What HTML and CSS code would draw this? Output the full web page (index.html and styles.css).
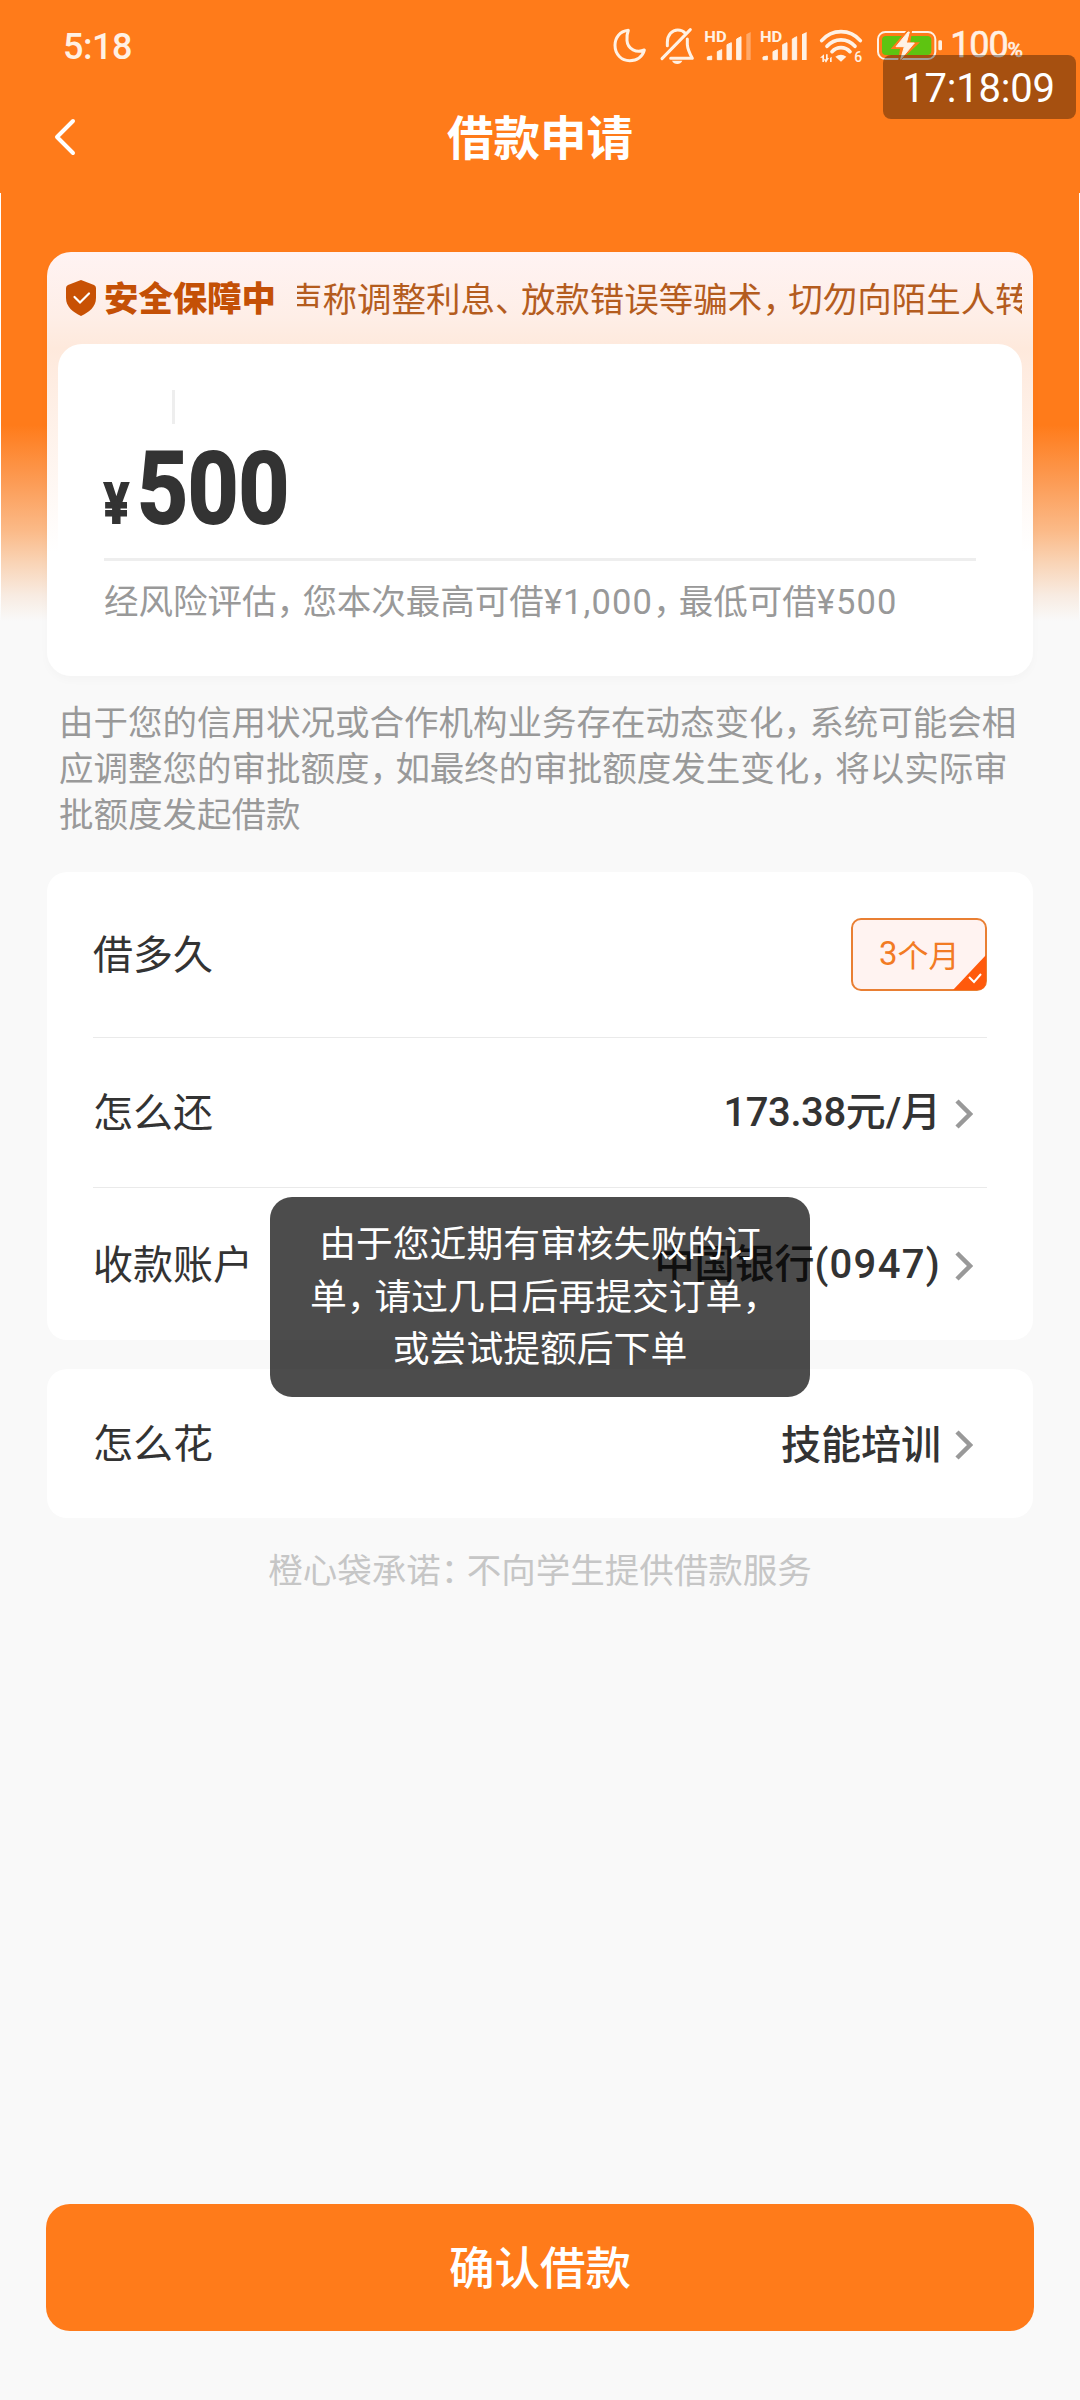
FILE: index.html
```html
<!DOCTYPE html>
<html lang="zh-CN">
<head>
<meta charset="utf-8">
<title>借款申请</title>
<link rel="stylesheet" href="styles.css">
</head>
<body>
<div class="app">
  <header class="top">
    <div class="status">
      <span class="clock">5:18</span>
      <svg class="status-icons" viewBox="90 75 1000 120" width="333.33" height="40">
        <defs>
          <g id="bars" stroke-width="3" stroke-linejoin="round">
            <path d="M8 171L21 168V179H8ZM38 155L51 149V179H38ZM67 134L80 128V179H67ZM96 117L109 110V179H96Z"/>
          </g>
        </defs>
        <g fill="none" stroke="#fff1e4" stroke-width="9" stroke-linecap="round" stroke-linejoin="round">
          <path d="M145 91C118 94 105 114 105 136C105 164 125 182 149 182C172 182 188 169 193 150C170 160 143 148 141 122C140 108 142 98 145 91Z"/>
          <path d="M331 89L246 176M262 137V127C262 104 277 90 293 90C302 90 310 93 315 99M322 117V134Q323 150 337 175H272"/>
        </g>
        <path d="M276 182H307Q302 192 292 192Q281 192 276 182Z" fill="#fff1e4"/>
        <g fill="#fff1e4" stroke="none">
          <text class="hd" x="373" y="125" textLength="67" lengthAdjust="spacingAndGlyphs">HD</text>
          <use href="#bars" x="374" stroke="#fff1e4"/>
          <path d="M499 103L512 96V180H499Z" opacity=".4"/>
          <text class="hd" x="540" y="125" textLength="67" lengthAdjust="spacingAndGlyphs">HD</text>
          <use href="#bars" x="541" stroke="#fff1e4"/>
          <path d="M666 103L680 96V180H666Z"/>
          <path d="M766 170Q783 159 799 170L783 185Z"/>
          <path d="M727 186V173H720L732 163V186ZM738 163V178H731L738 188L747 174H743V163ZM750 174V186H755V170Z"/>
          <text class="six" x="823" y="186">6</text>
          <rect x="1075" y="121" width="11" height="30" rx="4"/>
        </g>
        <g fill="none" stroke="#fff1e4" stroke-width="11" stroke-linecap="round">
          <path d="M725 122C756 86 810 86 841 122M741 139C764 113 802 113 825 139M756 155C771 139 795 139 810 155"/>
        </g>
        <rect x="894" y="96" width="172" height="81" rx="22" fill="none" stroke="#fff1e4" stroke-width="6"/>
        <rect x="906" y="108" width="148" height="57" rx="12" fill="#5ec411"/>
        <path d="M983 88L932 147H960L953 190L1020 127H991L997 88Z" fill="#ff7b1a"/>
        <path d="M984 96L948 140H973L962 178L1003 129H979L988 96Z" fill="#fff1e4" stroke="#fff1e4" stroke-width="3"/>
      </svg>
      <span class="battery">100<small>%</small></span>
    </div>
    <nav class="nav">
      <svg class="back" width="24" height="40" viewBox="0 0 24 40"><path d="M21 4L5 20L21 36" fill="none" stroke="#fff" stroke-width="4" stroke-linecap="round" stroke-linejoin="round"/></svg>
      <h1>借款申请</h1>
    </nav>
  </header>

  <main class="content">
    <section class="loan">
      <div class="safety">
        <svg width="30" height="36" viewBox="0 0 30 36"><path d="M15 0L28 5Q30 6 30 8V18C30 27 23 32 15 36C7 32 0 27 0 18V8Q0 6 2 5Z" fill="#c85104"/><path d="M8.500 17L14 22.500L23 13.500" fill="none" stroke="#fff" stroke-width="2.200" stroke-linecap="round"/></svg>
        <strong>安全保障中</strong>
        <div class="marquee"><span>声称调整利息<i>、</i>放款错误等骗术<i>，</i>切勿向陌生人转</span></div>
      </div>
      <div class="amount-card">
        <div class="mark"></div>
        <div class="amount"><span class="yen">¥</span><span class="num">500</span></div>
        <p class="limit">经风险评估<i>，</i>您本次最高可借<b>¥1,000</b><i>，</i>最低可借<b>¥500</b></p>
      </div>
    </section>

    <p class="notice">由于您的信用状况或合作机构业务存在动态变化<i>，</i>系统可能会相<br>应调整您的审批额度<i>，</i>如最终的审批额度发生变化<i>，</i>将以实际审<br>批额度发起借款</p>

    <section class="list">
      <div class="row term">
        <span>借多久</span>
        <div class="chip"><b>3</b>个月
          <svg class="tick" width="33" height="35" viewBox="0 0 33 35"><path d="M0 35L33 0V26Q33 35 24 35Z" fill="#ff5a0c"/><path d="M16 22L21 27L28 19" fill="none" stroke="#fff" stroke-width="2"/></svg>
        </div>
      </div>
      <div class="row repay">
        <span>怎么还</span>
        <div class="value"><p><b>173.38</b>元<b>/</b>月</p><svg class="arrow" viewBox="0 0 18 30"><path d="M2 2L15 15L2 28"/></svg></div>
      </div>
      <div class="row account">
        <span>收款账户</span>
        <div class="value"><p>中国银行<b>(0947)</b></p><svg class="arrow" viewBox="0 0 18 30"><path d="M2 2L15 15L2 28"/></svg></div>
      </div>
    </section>

    <section class="list usage">
      <div class="row">
        <span>怎么花</span>
        <div class="value"><p>技能培训</p><svg class="arrow" viewBox="0 0 18 30"><path d="M2 2L15 15L2 28"/></svg></div>
      </div>
    </section>
    <p class="promise">橙心袋承诺<i>：</i>不向学生提供借款服务</p>
  </main>

  <button class="confirm">确认借款</button>

  <div class="toast">由于您近期有审核失败的订<br>单<i>，</i>请过几日后再提交订单<i>，</i><br>或尝试提额后下单</div>
  <div class="timestamp">17:18:09</div>
</div>
</body>
</html>
```
FILE: styles.css
```css
* { box-sizing: border-box; margin: 0; padding: 0; }
body { background: #f9f9f9; font-family: "Noto Sans CJK SC", sans-serif; }
i { font-style: normal; letter-spacing: -0.25em; }
b { font-family: Roboto, sans-serif; font-weight: inherit; }

.app { position: relative; display: flex; flex-direction: column; width: 1080px; height: 2400px; overflow: hidden; }

.top { height: 193px; background: #ff7b1a; color: #fff; }
.status { display: flex; align-items: center; height: 91px; padding-left: 63px; color: #fff1e4; font-family: Roboto, sans-serif; font-weight: 500; }
.clock { width: 547px; padding-top: 2px; font-size: 36px; letter-spacing: -0.5px; }
.status-icons { flex: none; margin-top: -1px; }
.battery { margin: 3px 0 0 7px; font-size: 36px; line-height: 40px; font-weight: 400; letter-spacing: -1.2px; -webkit-text-stroke: 0.6px #fff1e4; }
.battery small { font-size: 21px; }
.hd { font: 700 42px Roboto, sans-serif; }
.six { font: 500 42px Roboto, sans-serif; }
.nav { position: relative; display: flex; align-items: center; justify-content: center; height: 92px; padding-bottom: 4px; }
.back { position: absolute; left: 52px; top: 26px; }
.nav h1 { font-size: 46.500px; line-height: 60px; font-weight: 700; }

.content {
  flex: 1;
  padding: 59px 47px 0;
  background:
    linear-gradient(#ff7b1a 0 232px, #fc9c56 290px, #fbba88 338px, #f9d4b6 370px, #f8ebe1 402px, #f9f9f9 428px) center top / 1078px 429px no-repeat,
    linear-gradient(#fff 0 400px, #f9f9f9 429px);
}

.loan { height: 424px; border-radius: 24px; padding: 0 11px; background: linear-gradient(#fff3f3, #feeee7 64px, #fee9dc 96px, #fff 300px); box-shadow: 0 4px 10px rgba(0,0,0,.025); }
.safety { display: flex; align-items: center; height: 92px; padding-left: 8px; }
.safety svg { flex: none; }
.safety strong { margin: -4px 22px 0 8px; width: 171px; flex: none; color: #c45006; font-size: 34.400px; line-height: 50px; font-weight: 900; white-space: nowrap; }
.marquee { flex: 1; height: 50px; overflow: hidden; color: #b45c1e; font-size: 34.500px; line-height: 48px; white-space: nowrap; }
.marquee span { display: inline-block; margin-left: -9px; }
.amount-card { height: 332px; padding: 46px 46px 0; border-radius: 24px; background: #fff; }
.mark { width: 3px; height: 34px; margin-left: 68px; background: #eee; }
.amount { display: flex; align-items: baseline; height: 137px; padding-top: 15px; border-bottom: 3px solid #eee; color: #333; font-family: Roboto, sans-serif; font-weight: 700; line-height: 100px; }
.yen { width: 33px; font-size: 55px; transform: scaleX(.84); transform-origin: left; -webkit-text-stroke: 2px #333; }
.num { font-size: 100px; transform: scaleX(.885); transform-origin: left; -webkit-text-stroke: 2px #333; }
.limit { margin-top: 13px; color: #999; font-size: 34.500px; line-height: 50px; white-space: nowrap; }
.limit b { letter-spacing: 1.100px; }
.notice { height: 142px; margin: 21px 0 33px 12px; color: #999; font-size: 34.500px; line-height: 46px; white-space: nowrap; }

.list { border-radius: 20px; background: #fff; padding: 0 46px; color: #333; font-size: 40px; }
.row { display: flex; align-items: center; justify-content: space-between; height: 149px; }
.row > span { margin-bottom: 5px; }
.term { height: 166px; border-bottom: 1px solid #eaeaea; }
.repay { height: 150px; border-bottom: 1px solid #eaeaea; }
.account { height: 152px; }
.usage { margin-top: 29px; }
.value { display: flex; align-items: center; font-weight: 500; line-height: 60px; padding-right: 14px; }
.value p { margin-bottom: 3px; }
.repay b { letter-spacing: -0.4px; }
.account b { letter-spacing: 1.300px; }
.arrow { width: 18px; height: 30px; margin: 3px 0 0 14px; fill: none; stroke: #999; stroke-width: 4.500; }
.chip { position: relative; display: flex; align-items: center; width: 136px; height: 73px; padding: 0 0 3px 26px; border: 2px solid #e97f33; border-radius: 10px; background: #fff3f1; color: #f27b24; font-size: 31px; white-space: nowrap; }
.chip b { font-size: 33px; }
.tick { position: absolute; right: -1px; bottom: -1px; }
.promise { margin-top: 25px; color: #c6c6c6; font-size: 34.500px; line-height: 50px; text-align: center; }

.confirm { flex: none; height: 127px; margin: 0 46px 69px; padding-bottom: 5px; border: 0; border-radius: 24px; background: #ff7b1a; color: #fff; font: 500 45.500px "Noto Sans CJK SC", sans-serif; }

.toast { position: absolute; left: 270px; top: 1197px; width: 540px; height: 200px; padding-top: 18px; border-radius: 22px; background: rgba(0,0,0,.7); color: #fff; font-size: 36.800px; line-height: 52.500px; text-align: center; white-space: nowrap; }
.timestamp { position: absolute; left: 883px; top: 55px; width: 193px; height: 64px; padding-right: 2px; border-radius: 8px; background: rgba(0,0,0,.35); color: #fff; font: 400 40px/68px Roboto, sans-serif; letter-spacing: -0.2px; text-align: center; }
```
